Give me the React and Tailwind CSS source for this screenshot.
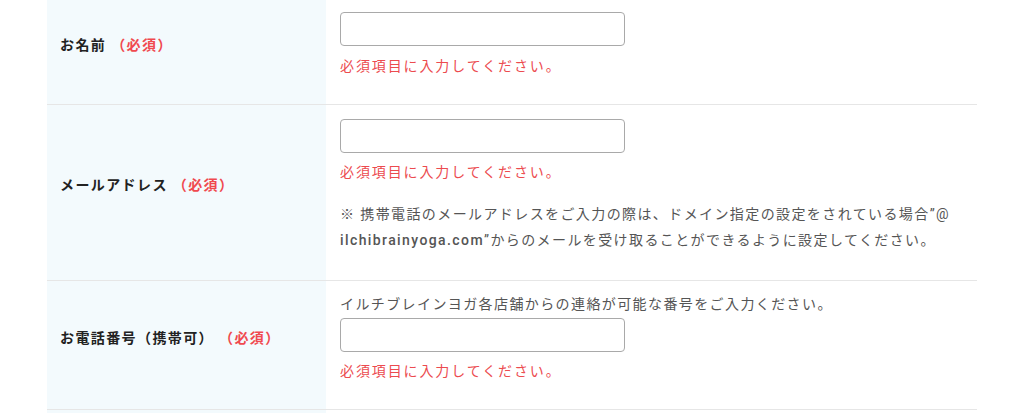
import React from "react";

const Required = () => (
  <span className="ml-[5px] text-[#f0494f]">（必須）</span>
);

const Row = ({ label, children }) => (
  <div className="flex border-b border-[#e6e6e6]">
    {/* label cell */}
    <div className="w-[279px] shrink-0 bg-[#f3fafd] pl-[13px] pb-[14px] flex items-center">
      <p className="text-[14px] font-bold tracking-[0.1em] text-[#222] [text-spacing-trim:space-all]">
        {label}
      </p>
    </div>
    {/* input cell */}
    <div className="flex-1 pl-[14px]">{children}</div>
  </div>
);

const Field = () => (
  <input
    type="text"
    className="block w-[285px] h-[34px] bg-white border border-[#a9a9a9] rounded-[4px]"
  />
);

const Error = ({ className }) => (
  <p className={"text-[14px] leading-[20px] tracking-[0.135em] text-[#ec4b4f] " + className}>
    必須項目に入力してください。
  </p>
);

const App = () => {
  return (
    <div
      className="w-[1024px] h-[413px] overflow-hidden bg-white"
      style={{ fontFamily: 'Roboto, "Noto Sans CJK JP", sans-serif' }}
    >
      <div className="ml-[47px] w-[930px]">
        {/* name */}
        <Row
          label={
            <>
              お名前
              <Required />
            </>
          }
        >
          <div className="pt-[12px] pb-[28px]">
            <Field />
            <Error className="mt-[10px]" />
          </div>
        </Row>

        {/* email */}
        <Row
          label={
            <>
              メールアドレス
              <Required />
            </>
          }
        >
          <div className="pt-[14px] pb-[27px]">
            <Field />
            <Error className="mt-[9px]" />
            <p className="mt-[19px] text-[14px] leading-[26px] tracking-[0.1em] text-[#555]">
              ※ 携帯電話のメールアドレスをご入力の際は、ドメイン指定の設定をされている場合”@
              <br />
              <span className="font-medium">ilchibrainyoga.com</span>”からのメールを受け取ることができるように設定してください。
            </p>
          </div>
        </Row>

        {/* tel */}
        <Row
          label={
            <>
              お電話番号（携帯可）
              <Required />
            </>
          }
        >
          <div className="pt-[13px] pb-[28px]">
            <p className="text-[14px] leading-[20px] tracking-[0.1em] text-[#555]">
              イルチブレインヨガ各店舗からの連絡が可能な番号をご入力ください。
            </p>
            <div className="mt-[4px]">
              <Field />
            </div>
            <Error className="mt-[9px]" />
          </div>
        </Row>

        <div className="h-[10px] bg-[#f3fafd] w-[279px]" />
      </div>
    </div>
  );
};

export default App;
